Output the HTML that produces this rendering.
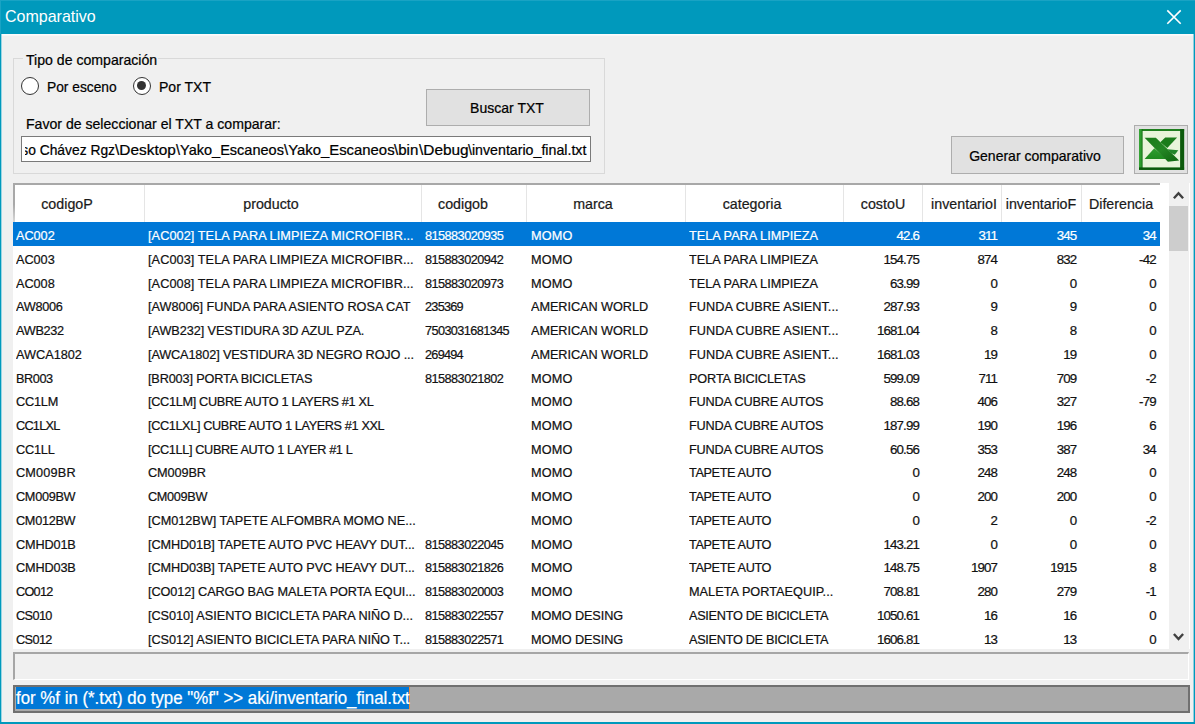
<!DOCTYPE html>
<html lang="es"><head><meta charset="utf-8"><title>Comparativo</title>
<style>
*{box-sizing:border-box;margin:0;padding:0}
html,body{width:1195px;height:724px;overflow:hidden;background:#f0f0f0}
body{position:relative;font-family:"Liberation Sans",sans-serif;font-size:15px;color:#000}
.abs{position:absolute}
.tx{position:absolute;line-height:20px;height:20px;white-space:nowrap;-webkit-text-stroke:0.22px currentColor}
#title{left:0;top:0;width:1195px;height:34px;background:#0099bc}
#bl{left:0;top:34px;width:2px;height:690px;background:#0099bc;border-right:1px solid #9bd5e3}
#br{left:1193px;top:34px;width:2px;height:690px;background:#0099bc;border-left:1px solid #8fd0e0}
#bb{left:0;top:722px;width:1195px;height:2px;background:#0099bc}
#grp{left:13px;top:58px;width:592px;height:116px;border:1px solid #d9d9d9}
#grpl{left:23px;top:49px;width:135px;height:18px;background:#f0f0f0}
.radio{width:18px;height:18px;border-radius:50%;border:1.5px solid #333;background:#fff}
.radio i{position:absolute;left:3px;top:3px;width:9px;height:9px;border-radius:50%;background:#333}
.btn{border:1px solid #adadad;background:#e1e1e1}
#txt{left:21px;top:136px;width:570px;height:26px;background:#fff;border:1px solid #7a7a7a;overflow:hidden}
#list{left:13px;top:183px;width:1177px;height:465.5px;background:#fff;overflow:hidden}
#lt{left:13px;top:183px;width:1147px;height:2px;background:#a8a8a8}
#ll{left:13px;top:183px;width:2px;height:39px;background:linear-gradient(#a8a8a8 0,#a8a8a8 55%,#d8d8d8 100%)}
.sep{position:absolute;top:185px;width:1px;height:37px;background:#e5e5e5}
.row{position:absolute;left:13.3px;width:1147.2px;height:23.72px;font-size:13.3px;line-height:23.72px;white-space:nowrap;letter-spacing:-0.27px;color:#111;-webkit-text-stroke:0.22px currentColor}
.row.sel{background:#0078d7;color:#fff}
.c{position:absolute;top:1.7px;height:100%;overflow:hidden}
.c0,.c1,.c2,.c3,.c4{transform:scaleX(.955);transform-origin:0 0}
.c0{left:2.7px;width:128px}.c1{left:134.7px;width:290px}.c2{left:411.7px;width:104px}.c3{left:517.7px;width:156px}.c4{left:675.9px;width:156px}
.c2,.c5,.c6,.c7,.c8{letter-spacing:-0.85px}
.c5,.c6,.c7,.c8{overflow:visible;margin-left:-0.85px}
.c3{letter-spacing:-0.35px}.c4{letter-spacing:-0.5px}
.c5{left:831.6px;width:75px;text-align:right}.c6{left:909.7px;width:75px;text-align:right}.c7{left:988.9px;width:75px;text-align:right}.c8{left:1068.3px;width:75px;text-align:right}
#sb{left:1168.5px;top:183px;width:20px;height:465.5px;background:#f0f0f0}
#sbt{left:1169px;top:206px;width:19px;height:45px;background:#cdcdcd}
#prog{left:13px;top:651.5px;width:1176px;height:28.5px;background:#f0f0f0;border:2px solid #a6a6a6;border-right:1px solid #fff;border-bottom:1px solid #fff}
#cmd{left:13px;top:684.5px;width:1176.5px;height:28.5px;background:#a9a9a9;border:2px solid #707070}
#cmdsel{left:15.5px;top:686.5px;width:394.5px;height:22px;background:#0078d7;border-right:1px solid #e8873a}
</style></head><body>
<div id="title" class="abs"></div><div class="abs" style="left:0;top:0;width:1195px;height:1px;background:#19a3c4"></div><div class="abs" style="left:0;top:0;width:1px;height:34px;background:#19a3c4"></div><div class="abs" style="left:2px;top:34px;width:1191px;height:2px;background:linear-gradient(#fdfdfd,#f5f5f5)"></div>
<svg class="abs" style="left:1166px;top:9px" width="16" height="16" viewBox="0 0 16 16"><path d="M1.3 1.4L14.7 14.8M14.7 1.4L1.3 14.8" stroke="#fff" stroke-width="1.6" fill="none"/></svg>
<div id="bl" class="abs"></div><div id="br" class="abs"></div><div id="bb" class="abs"></div>
<div id="grp" class="abs"></div><div id="grpl" class="abs"></div>
<div class="abs radio" style="left:20.7px;top:77px"></div>
<div class="abs radio" style="left:132.7px;top:77px"><i></i></div>
<div id="txt" class="abs"></div>
<div class="abs btn" style="left:426px;top:89px;width:164px;height:37px"></div>
<div class="abs btn" style="left:951px;top:136px;width:173px;height:38px"></div>
<div class="abs btn" style="left:1134px;top:125px;width:54px;height:49px"></div>
<svg class="abs" style="left:1139px;top:129px" width="46" height="42" viewBox="0 0 46 42">
<defs>
<linearGradient id="gl" x1="0" y1="0" x2="1" y2="0"><stop offset="0" stop-color="#37a637"/><stop offset="0.6" stop-color="#2a972a"/><stop offset="1" stop-color="#0e6a0e"/></linearGradient>
<linearGradient id="gm" x1="0" y1="0" x2="1" y2="1"><stop offset="0" stop-color="#1a7a1a"/><stop offset="0.5" stop-color="#248624"/><stop offset="1" stop-color="#0f640f"/></linearGradient>
<linearGradient id="gt" x1="0" y1="0" x2="0" y2="1"><stop offset="0" stop-color="#2f9d2f"/><stop offset="1" stop-color="#1f8a1f"/></linearGradient>
</defs>
<rect x="0" y="0" width="45.1" height="40.8" fill="#146c14"/>
<rect x="0" y="0" width="45.1" height="2" fill="#1f7f1f"/>
<rect x="0" y="0" width="3.6" height="40.8" fill="url(#gl)"/>
<rect x="41.1" y="0" width="4" height="40.8" fill="#0c5a0c"/>
<rect x="0" y="38.4" width="45.1" height="2.4" fill="#0b590b"/>
<rect x="3.6" y="2" width="37.5" height="36.4" fill="#e8f4da"/>
<polygon points="5.6,29.9 15.3,19.3 27.5,29.9" fill="url(#gt)"/>
<polygon points="21.3,13.3 26.2,8.6 38.1,8.6 28.3,19" fill="#1b7c1b"/>
<polygon points="28.4,20.3 39.3,21.2 35.8,25.7 32.4,24.2" fill="#23862a"/>
<polygon points="5.6,8.8 16.9,8.8 40.1,31.5 28.9,32.7" fill="url(#gm)"/>
</svg>
<div id="list" class="abs"></div><div id="lt" class="abs"></div><div id="ll" class="abs"></div>
<div id="sb" class="abs"></div><div id="sbt" class="abs"></div>
<svg class="abs" style="left:1172px;top:189px" width="13" height="12" viewBox="0 0 13 12"><path d="M1.9 9.2L6.5 4.2L11.1 9.2" stroke="#404040" stroke-width="2.4" fill="none"/></svg>
<svg class="abs" style="left:1172px;top:630px" width="13" height="12" viewBox="0 0 13 12"><path d="M1.9 4L6.5 9L11.1 4" stroke="#404040" stroke-width="2.4" fill="none"/></svg>

<div class="sep" style="left:144px"></div>
<div class="sep" style="left:421px"></div>
<div class="sep" style="left:526px"></div>
<div class="sep" style="left:685px"></div>
<div class="sep" style="left:843px"></div>
<div class="sep" style="left:922px"></div>
<div class="sep" style="left:1001px"></div>
<div class="sep" style="left:1081px"></div>
<div id="prog" class="abs"></div><div id="cmd" class="abs"></div><div id="cmdsel" class="abs"></div>
<div class="row sel" style="top:222.40px"><span class="c c0" style="letter-spacing:-0.035px">AC002</span><span class="c c1" style="letter-spacing:0.079px">[AC002] TELA PARA LIMPIEZA MICROFIBR...</span><span class="c c2" style="letter-spacing:-0.564px">815883020935</span><span class="c c3" style="letter-spacing:0.167px">MOMO</span><span class="c c4" style="letter-spacing:0.005px">TELA PARA LIMPIEZA</span><span class="c c5">42.6</span><span class="c c6">311</span><span class="c c7">345</span><span class="c c8">34</span></div>
<div class="row" style="top:246.14px"><span class="c c0" style="letter-spacing:-0.035px">AC003</span><span class="c c1" style="letter-spacing:0.079px">[AC003] TELA PARA LIMPIEZA MICROFIBR...</span><span class="c c2" style="letter-spacing:-0.564px">815883020942</span><span class="c c3" style="letter-spacing:0.167px">MOMO</span><span class="c c4" style="letter-spacing:0.005px">TELA PARA LIMPIEZA</span><span class="c c5">154.75</span><span class="c c6">874</span><span class="c c7">832</span><span class="c c8">-42</span></div>
<div class="row" style="top:269.88px"><span class="c c0" style="letter-spacing:-0.035px">AC008</span><span class="c c1" style="letter-spacing:0.079px">[AC008] TELA PARA LIMPIEZA MICROFIBR...</span><span class="c c2" style="letter-spacing:-0.564px">815883020973</span><span class="c c3" style="letter-spacing:0.167px">MOMO</span><span class="c c4" style="letter-spacing:0.005px">TELA PARA LIMPIEZA</span><span class="c c5">63.99</span><span class="c c6">0</span><span class="c c7">0</span><span class="c c8">0</span></div>
<div class="row" style="top:293.62px"><span class="c c0" style="letter-spacing:-0.312px">AW8006</span><span class="c c1" style="letter-spacing:-0.028px">[AW8006] FUNDA PARA ASIENTO ROSA CAT</span><span class="c c2" style="letter-spacing:-0.785px">235369</span><span class="c c3" style="letter-spacing:-0.059px">AMERICAN WORLD</span><span class="c c4" style="letter-spacing:0.031px">FUNDA CUBRE ASIENT...</span><span class="c c5">287.93</span><span class="c c6">9</span><span class="c c7">9</span><span class="c c8">0</span></div>
<div class="row" style="top:317.36px"><span class="c c0" style="letter-spacing:-0.307px">AWB232</span><span class="c c1" style="letter-spacing:-0.077px">[AWB232] VESTIDURA 3D AZUL PZA.</span><span class="c c2" style="letter-spacing:-0.623px">7503031681345</span><span class="c c3" style="letter-spacing:-0.059px">AMERICAN WORLD</span><span class="c c4" style="letter-spacing:0.031px">FUNDA CUBRE ASIENT...</span><span class="c c5">1681.04</span><span class="c c6">8</span><span class="c c7">8</span><span class="c c8">0</span></div>
<div class="row" style="top:341.10px"><span class="c c0" style="letter-spacing:0.001px">AWCA1802</span><span class="c c1" style="letter-spacing:-0.147px">[AWCA1802] VESTIDURA 3D NEGRO ROJO ...</span><span class="c c2" style="letter-spacing:-0.785px">269494</span><span class="c c3" style="letter-spacing:-0.059px">AMERICAN WORLD</span><span class="c c4" style="letter-spacing:0.031px">FUNDA CUBRE ASIENT...</span><span class="c c5">1681.03</span><span class="c c6">19</span><span class="c c7">19</span><span class="c c8">0</span></div>
<div class="row" style="top:364.84px"><span class="c c0" style="letter-spacing:-0.435px">BR003</span><span class="c c1" style="letter-spacing:-0.162px">[BR003] PORTA BICICLETAS</span><span class="c c2" style="letter-spacing:-0.564px">815883021802</span><span class="c c3" style="letter-spacing:0.167px">MOMO</span><span class="c c4" style="letter-spacing:-0.129px">PORTA BICICLETAS</span><span class="c c5">599.09</span><span class="c c6">711</span><span class="c c7">709</span><span class="c c8">-2</span></div>
<div class="row" style="top:388.58px"><span class="c c0" style="letter-spacing:-0.219px">CC1LM</span><span class="c c1" style="letter-spacing:-0.333px">[CC1LM] CUBRE AUTO 1 LAYERS #1 XL</span><span class="c c2"></span><span class="c c3" style="letter-spacing:0.167px">MOMO</span><span class="c c4" style="letter-spacing:-0.191px">FUNDA CUBRE AUTOS</span><span class="c c5">88.68</span><span class="c c6">406</span><span class="c c7">327</span><span class="c c8">-79</span></div>
<div class="row" style="top:412.32px"><span class="c c0" style="letter-spacing:-0.783px">CC1LXL</span><span class="c c1" style="letter-spacing:-0.392px">[CC1LXL] CUBRE AUTO 1 LAYERS #1 XXL</span><span class="c c2"></span><span class="c c3" style="letter-spacing:0.167px">MOMO</span><span class="c c4" style="letter-spacing:-0.191px">FUNDA CUBRE AUTOS</span><span class="c c5">187.99</span><span class="c c6">190</span><span class="c c7">196</span><span class="c c8">6</span></div>
<div class="row" style="top:436.06px"><span class="c c0" style="letter-spacing:-0.194px">CC1LL</span><span class="c c1" style="letter-spacing:-0.374px">[CC1LL] CUBRE AUTO 1 LAYER #1 L</span><span class="c c2"></span><span class="c c3" style="letter-spacing:0.167px">MOMO</span><span class="c c4" style="letter-spacing:-0.191px">FUNDA CUBRE AUTOS</span><span class="c c5">60.56</span><span class="c c6">353</span><span class="c c7">387</span><span class="c c8">34</span></div>
<div class="row" style="top:459.80px"><span class="c c0" style="letter-spacing:0.174px">CM009BR</span><span class="c c1" style="letter-spacing:-0.11px">CM009BR</span><span class="c c2"></span><span class="c c3" style="letter-spacing:0.167px">MOMO</span><span class="c c4" style="letter-spacing:-0.408px">TAPETE AUTO</span><span class="c c5">0</span><span class="c c6">248</span><span class="c c7">248</span><span class="c c8">0</span></div>
<div class="row" style="top:483.54px"><span class="c c0" style="letter-spacing:-0.326px">CM009BW</span><span class="c c1" style="letter-spacing:-0.342px">CM009BW</span><span class="c c2"></span><span class="c c3" style="letter-spacing:0.167px">MOMO</span><span class="c c4" style="letter-spacing:-0.408px">TAPETE AUTO</span><span class="c c5">0</span><span class="c c6">200</span><span class="c c7">200</span><span class="c c8">0</span></div>
<div class="row" style="top:507.28px"><span class="c c0" style="letter-spacing:-0.326px">CM012BW</span><span class="c c1" style="letter-spacing:-0.02px">[CM012BW] TAPETE ALFOMBRA MOMO NE...</span><span class="c c2"></span><span class="c c3" style="letter-spacing:0.167px">MOMO</span><span class="c c4" style="letter-spacing:-0.408px">TAPETE AUTO</span><span class="c c5">0</span><span class="c c6">2</span><span class="c c7">0</span><span class="c c8">-2</span></div>
<div class="row" style="top:531.02px"><span class="c c0" style="letter-spacing:-0.149px">CMHD01B</span><span class="c c1" style="letter-spacing:-0.124px">[CMHD01B] TAPETE AUTO PVC HEAVY DUT...</span><span class="c c2" style="letter-spacing:-0.564px">815883022045</span><span class="c c3" style="letter-spacing:0.167px">MOMO</span><span class="c c4" style="letter-spacing:-0.408px">TAPETE AUTO</span><span class="c c5">143.21</span><span class="c c6">0</span><span class="c c7">0</span><span class="c c8">0</span></div>
<div class="row" style="top:554.76px"><span class="c c0" style="letter-spacing:-0.149px">CMHD03B</span><span class="c c1" style="letter-spacing:-0.124px">[CMHD03B] TAPETE AUTO PVC HEAVY DUT...</span><span class="c c2" style="letter-spacing:-0.564px">815883021826</span><span class="c c3" style="letter-spacing:0.167px">MOMO</span><span class="c c4" style="letter-spacing:-0.408px">TAPETE AUTO</span><span class="c c5">148.75</span><span class="c c6">1907</span><span class="c c7">1915</span><span class="c c8">8</span></div>
<div class="row" style="top:578.50px"><span class="c c0" style="letter-spacing:-0.754px">CO012</span><span class="c c1" style="letter-spacing:-0.097px">[CO012] CARGO BAG MALETA PORTA EQUI...</span><span class="c c2" style="letter-spacing:-0.564px">815883020003</span><span class="c c3" style="letter-spacing:0.167px">MOMO</span><span class="c c4" style="letter-spacing:0.028px">MALETA PORTAEQUIP...</span><span class="c c5">708.81</span><span class="c c6">280</span><span class="c c7">279</span><span class="c c8">-1</span></div>
<div class="row" style="top:602.24px"><span class="c c0" style="letter-spacing:-0.635px">CS010</span><span class="c c1" style="letter-spacing:-0.045px">[CS010] ASIENTO BICICLETA PARA NIÑO D...</span><span class="c c2" style="letter-spacing:-0.564px">815883022557</span><span class="c c3" style="letter-spacing:-0.107px">MOMO DESING</span><span class="c c4" style="letter-spacing:-0.304px">ASIENTO DE BICICLETA</span><span class="c c5">1050.61</span><span class="c c6">16</span><span class="c c7">16</span><span class="c c8">0</span></div>
<div class="row" style="top:625.98px"><span class="c c0" style="letter-spacing:-0.635px">CS012</span><span class="c c1" style="letter-spacing:-0.048px">[CS012] ASIENTO BICICLETA PARA NIÑO T...</span><span class="c c2" style="letter-spacing:-0.564px">815883022571</span><span class="c c3" style="letter-spacing:-0.107px">MOMO DESING</span><span class="c c4" style="letter-spacing:-0.304px">ASIENTO DE BICICLETA</span><span class="c c5">1606.81</span><span class="c c6">13</span><span class="c c7">13</span><span class="c c8">0</span></div>
<div class="tx" style="left:5.2px;top:6.95px;font-size:16.6px;color:#fff;transform:scaleX(0.965);transform-origin:0 50%;-webkit-text-stroke:0">Comparativo</div>
<div class="tx" style="left:25.6px;top:49.70px;font-size:15px;color:#000;transform:scaleX(0.94);transform-origin:0 50%;">Tipo de comparación</div>
<div class="tx" style="left:46.5px;top:77.00px;font-size:15px;color:#000;transform:scaleX(0.918);transform-origin:0 50%;">Por esceno</div>
<div class="tx" style="left:158.8px;top:77.00px;font-size:15px;color:#000;transform:scaleX(0.935);transform-origin:0 50%;">Por TXT</div>
<div class="tx" style="left:26.3px;top:113.80px;font-size:15px;color:#000;transform:scaleX(0.939);transform-origin:0 50%;">Favor de seleccionar el TXT a comparar:</div>
<div class="tx" style="left:207px;width:600px;text-align:center;top:97.60px;font-size:15px;color:#000;transform:scaleX(0.935);transform-origin:50% 50%;">Buscar TXT</div>
<div class="tx" style="left:735.2px;width:600px;text-align:center;top:145.80px;font-size:15px;color:#000;transform:scaleX(0.935);transform-origin:50% 50%;">Generar comparativo</div>
<div class="tx" style="left:-232.8px;width:600px;text-align:center;top:194.10px;font-size:15px;color:#1a1a1a;transform:scaleX(0.95);transform-origin:50% 50%;">codigoP</div>
<div class="tx" style="left:-28.80000000000001px;width:600px;text-align:center;top:194.10px;font-size:15px;color:#1a1a1a;transform:scaleX(0.95);transform-origin:50% 50%;">producto</div>
<div class="tx" style="left:162.60000000000002px;width:600px;text-align:center;top:194.10px;font-size:15px;color:#1a1a1a;transform:scaleX(0.95);transform-origin:50% 50%;">codigob</div>
<div class="tx" style="left:293.29999999999995px;width:600px;text-align:center;top:194.10px;font-size:15px;color:#1a1a1a;transform:scaleX(0.95);transform-origin:50% 50%;">marca</div>
<div class="tx" style="left:452.29999999999995px;width:600px;text-align:center;top:194.10px;font-size:15px;color:#1a1a1a;transform:scaleX(0.95);transform-origin:50% 50%;">categoria</div>
<div class="tx" style="left:583px;width:600px;text-align:center;top:194.10px;font-size:15px;color:#1a1a1a;transform:scaleX(0.95);transform-origin:50% 50%;">costoU</div>
<div class="tx" style="left:663.6px;width:600px;text-align:center;top:194.10px;font-size:15px;color:#1a1a1a;transform:scaleX(0.95);transform-origin:50% 50%;">inventarioI</div>
<div class="tx" style="left:741.3px;width:600px;text-align:center;top:194.10px;font-size:15px;color:#1a1a1a;transform:scaleX(0.95);transform-origin:50% 50%;">inventarioF</div>
<div class="tx" style="left:820.5px;width:600px;text-align:center;top:194.10px;font-size:15px;color:#1a1a1a;transform:scaleX(0.95);transform-origin:50% 50%;">Diferencia</div>
<div class="tx" style="left:16px;top:687.54px;font-size:17.5px;color:#fff;transform:scaleX(0.962);transform-origin:0 50%;">for %f in (*.txt) do type "%f" &gt;&gt; aki/inventario_final.txt</div>
<div class="abs" style="left:24.5px;top:137px;width:566.5px;height:24px;overflow:hidden"><div class="tx" style="right:476.10px;width:400px;text-align:right;top:2.80px;font-size:15px;transform:scaleX(0.9216);transform-origin:100% 50%">C:\Users\Alfonso Chávez Rgz</div><div class="tx" style="left:90.40px;top:2.80px;font-size:15px;transform:scaleX(1.027);transform-origin:0 50%">\Desktop</div><div class="tx" style="left:151.20px;top:2.80px;font-size:15px;transform:scaleX(0.968);transform-origin:0 50%">\Yako_Escaneos</div><div class="tx" style="left:259.10px;top:2.80px;font-size:15px;transform:scaleX(0.9922);transform-origin:0 50%">\Yako_Escaneos</div><div class="tx" style="left:369.70px;top:2.80px;font-size:15px;transform:scaleX(1.0047);transform-origin:0 50%">\bin</div><div class="tx" style="left:394.00px;top:2.80px;font-size:15px;transform:scaleX(1.0274);transform-origin:0 50%">\Debug</div><div class="tx" style="left:443.70px;top:2.80px;font-size:15px;transform:scaleX(0.9466);transform-origin:0 50%">\inventario_final.txt</div></div>
</body></html>
